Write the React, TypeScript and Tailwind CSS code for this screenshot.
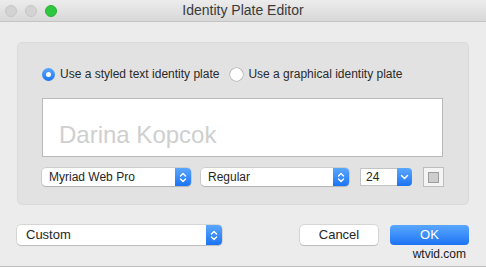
import React, { useState } from "react";

const font = { fontFamily: "'Liberation Sans', Arial, sans-serif" };

const UpDown = () => (
  <svg width="8" height="11" viewBox="0 0 8 11" fill="none">
    <path d="M1.5 4 L4 1.5 L6.5 4" stroke="white" strokeWidth="1.4" strokeLinecap="round" strokeLinejoin="round" />
    <path d="M1.5 7 L4 9.5 L6.5 7" stroke="white" strokeWidth="1.4" strokeLinecap="round" strokeLinejoin="round" />
  </svg>
);

const Down = () => (
  <svg width="9" height="6" viewBox="0 0 9 6" fill="none">
    <path d="M1.5 1.5 L4.5 4.5 L7.5 1.5" stroke="white" strokeWidth="1.5" strokeLinecap="round" strokeLinejoin="round" />
  </svg>
);

interface PopupProps {
  label: string;
  className?: string;
  textClass?: string;
}

const Popup = ({ label, className, textClass }: PopupProps) => (
  <div className={"flex items-stretch bg-white rounded-[4px] shadow-[0_0_0_0.5px_rgba(0,0,0,0.18),0_1px_1px_rgba(0,0,0,0.12)] " + className}>
    <span className={"flex-1 flex items-center text-[#262626] " + textClass}>{label}</span>
    <span className="w-[16px] flex items-center justify-center rounded-r-[4px] bg-gradient-to-b from-[#5aa7ff] to-[#1a73f2]">
      <UpDown />
    </span>
  </div>
);

const App = () => {
  const [styled, setStyled] = useState(true);

  return (
    <div className="w-[486px] h-[267px] bg-[#ececec] flex flex-col relative overflow-hidden border-b border-[#bdbdbd]" style={font}>
      <div className="h-[22px] relative flex items-center justify-center bg-gradient-to-b from-[#ececec] to-[#d8d8d8] border-b border-[#c4c4c4]">
        <div className="absolute left-[5px] top-[5px] flex gap-[8px]">
          <span className="w-[12px] h-[12px] rounded-full bg-[#d3d3d3] border border-[#c6c6c6]" />
          <span className="w-[12px] h-[12px] rounded-full bg-[#d3d3d3] border border-[#c6c6c6]" />
          <span className="w-[12px] h-[12px] rounded-full bg-[#2ec840] border border-[#26b236]" />
        </div>
        <span className="text-[14px] text-[#3a3a3a]">Identity Plate Editor</span>
      </div>

      <div className="mx-[17px] mt-[20px] h-[163px] rounded-[5px] bg-[#e2e2e2] border border-[#dadada] pl-[24px] pt-[23px]">
        <div className="flex items-center h-[16px] text-[12px] text-[#2a2a2a]">
          <button onClick={() => setStyled(true)} className="flex items-center gap-[5px]">
            <span className={"w-[13px] h-[13px] rounded-full flex items-center justify-center " + (styled ? "bg-gradient-to-b from-[#58a6ff] to-[#1b74f2]" : "bg-white shadow-[0_0_0_0.5px_rgba(0,0,0,0.3)]")}>
              {styled && <span className="w-[5px] h-[5px] rounded-full bg-white" />}
            </span>
            Use a styled text identity plate
          </button>
          <button onClick={() => setStyled(false)} className="flex items-center gap-[5px] ml-[11px]">
            <span className={"w-[13px] h-[13px] rounded-full flex items-center justify-center " + (!styled ? "bg-gradient-to-b from-[#58a6ff] to-[#1b74f2]" : "bg-white shadow-[0_0_0_0.5px_rgba(0,0,0,0.3)]")}>
              {!styled && <span className="w-[5px] h-[5px] rounded-full bg-white" />}
            </span>
            Use a graphical identity plate
          </button>
        </div>

        <div className="mt-[16px] w-[401px] h-[59px] bg-white border border-[#b9b9b9] flex items-end pl-[16px] pb-[9px]">
          <span className="text-[24px] leading-none text-[#cfcfcf]">Darina Kopcok</span>
        </div>

        <div className="mt-[10px] flex items-center">
          <Popup label="Myriad Web Pro" className="w-[149px] h-[18px]" textClass="pl-[7px] text-[12px]" />
          <Popup label="Regular" className="w-[148px] h-[18px] ml-[10px]" textClass="pl-[7px] text-[12px]" />
          <div className="ml-[11px] w-[52px] h-[18px] flex items-stretch">
            <span className="flex-1 bg-white border border-[#c4c4c4] border-r-0 flex items-center pl-[5px] text-[12px] text-[#262626]">24</span>
            <span className="w-[15px] flex items-center justify-center rounded-r-[4px] bg-gradient-to-b from-[#5aa7ff] to-[#1a73f2]">
              <Down />
            </span>
          </div>
          <div className="ml-[11px] w-[21px] h-[20px] border border-[#bdbdbd] bg-[#f4f4f4] flex items-center justify-center">
            <span className="w-[11px] h-[11px] bg-[#cdcdcd] border border-[#9d9d9d]" />
          </div>
        </div>
      </div>

      <div className="mt-[20px] px-[17px] flex items-center">
        <Popup label="Custom" className="w-[205px] h-[20px]" textClass="pl-[9px] text-[13px]" />
        <button className="ml-auto w-[78px] h-[20px] rounded-[4px] bg-white text-[13px] text-[#262626] shadow-[0_0_0_0.5px_rgba(0,0,0,0.18),0_1px_1px_rgba(0,0,0,0.12)]">
          Cancel
        </button>
        <button className="ml-[12px] w-[79px] h-[20px] rounded-[4px] bg-gradient-to-b from-[#5aa7ff] to-[#1a73f2] text-[13px] text-white">
          OK
        </button>
      </div>

      <span className="absolute right-[20px] bottom-[3px] text-[12px] text-[#1a1a1a]">wtvid.com</span>
    </div>
  );
};

export default App;
